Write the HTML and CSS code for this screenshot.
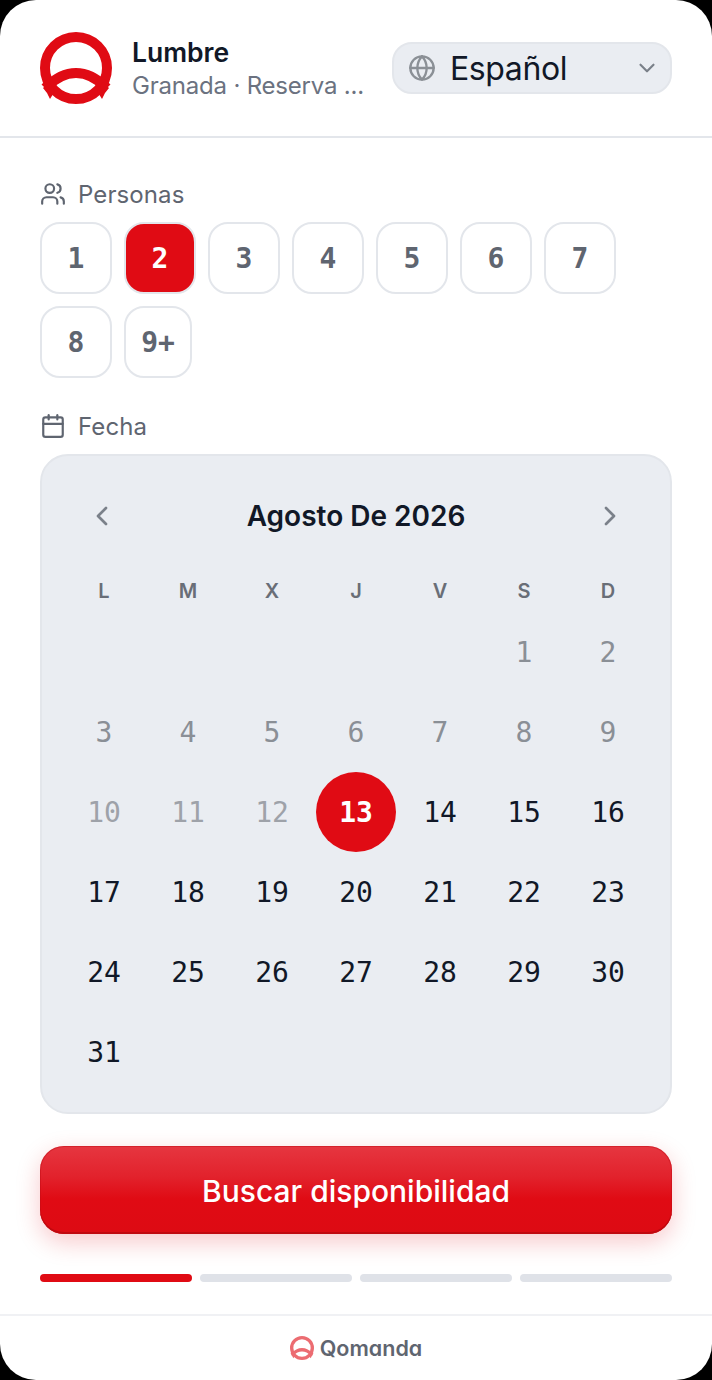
FILE: index.html
```html
<!DOCTYPE html>
<html lang="es">
<head>
    <meta charset="UTF-8">
    <meta name="viewport" content="width=device-width, initial-scale=1.0">
    <title>Lumbre - Reserva</title>
    <link rel="stylesheet" href="styles.css">
</head>
<body>
    <div class="screen">
        <header class="top">
            <svg class="logo" viewBox="0 0 72 72" fill="none">
                <circle cx="36" cy="36" r="31" stroke="#e00b14" stroke-width="10"/>
                <path d="M5 56 Q36 26 67 56" stroke="#e00b14" stroke-width="10"/>
                <path d="M3 56 L9 50 L15 59 L10 67 L7 61 Z" fill="#e00b14"/>
                <path d="M69 56 L63 50 L57 59 L62 67 L65 61 Z" fill="#e00b14"/>
            </svg>
            <div class="place">
                <div class="place-name">Lumbre</div>
                <div class="place-sub">Granada · Reserva ...</div>
            </div>
            <div class="lang">
                <svg class="lang-globe" viewBox="0 0 24 24" fill="none" stroke="currentColor" stroke-width="2" stroke-linecap="round" stroke-linejoin="round">
                    <circle cx="12" cy="12" r="10"/>
                    <path d="M12 2a14.5 14.5 0 0 0 0 20 14.5 14.5 0 0 0 0-20"/>
                    <path d="M2 12h20"/>
                </svg>
                <span class="lang-text">Español</span>
                <svg class="lang-chevron" viewBox="0 0 24 24" fill="none" stroke="currentColor" stroke-width="2" stroke-linecap="round" stroke-linejoin="round">
                    <path d="m6 9 6 6 6-6"/>
                </svg>
            </div>
        </header>

        <main class="content">
            <div class="field-label">
                <svg class="field-icon" viewBox="0 0 24 24" fill="none" stroke="currentColor" stroke-width="2" stroke-linecap="round" stroke-linejoin="round">
                    <path d="M16 21v-2a4 4 0 0 0-4-4H6a4 4 0 0 0-4 4v2"/>
                    <circle cx="9" cy="7" r="4"/>
                    <path d="M22 21v-2a4 4 0 0 0-3-3.87"/>
                    <path d="M16 3.13a4 4 0 0 1 0 7.75"/>
                </svg>
                Personas
            </div>
            <div class="party">
                <button class="party-btn">1</button>
                <button class="party-btn selected">2</button>
                <button class="party-btn">3</button>
                <button class="party-btn">4</button>
                <button class="party-btn">5</button>
                <button class="party-btn">6</button>
                <button class="party-btn">7</button>
                <button class="party-btn">8</button>
                <button class="party-btn">9+</button>
            </div>

            <div class="field-label date-label">
                <svg class="field-icon" viewBox="0 0 24 24" fill="none" stroke="currentColor" stroke-width="2" stroke-linecap="round" stroke-linejoin="round">
                    <path d="M8 2v4"/>
                    <path d="M16 2v4"/>
                    <rect x="3" y="4" width="18" height="18" rx="2"/>
                    <path d="M3 10h18"/>
                </svg>
                Fecha
            </div>
            <section class="calendar">
                <div class="cal-head">
                    <svg class="cal-nav" viewBox="0 0 24 24" fill="none" stroke="currentColor" stroke-width="2" stroke-linecap="round" stroke-linejoin="round"><path d="m15 18-6-6 6-6"/></svg>
                    <div class="cal-title">Agosto De 2026</div>
                    <svg class="cal-nav" viewBox="0 0 24 24" fill="none" stroke="currentColor" stroke-width="2" stroke-linecap="round" stroke-linejoin="round"><path d="m9 18 6-6-6-6"/></svg>
                </div>
                <div class="cal-week">
                    <span>L</span><span>M</span><span>X</span><span>J</span><span>V</span><span>S</span><span>D</span>
                </div>
                <div class="cal-days">
                    <span></span><span></span><span></span><span></span><span></span>
                    <span class="day past">1</span><span class="day past">2</span>
                    <span class="day past">3</span><span class="day past">4</span><span class="day past">5</span><span class="day past">6</span><span class="day past">7</span><span class="day past">8</span><span class="day past">9</span>
                    <span class="day faded">10</span><span class="day faded">11</span><span class="day faded">12</span><span class="day today">13</span><span class="day">14</span><span class="day">15</span><span class="day">16</span>
                    <span class="day">17</span><span class="day">18</span><span class="day">19</span><span class="day">20</span><span class="day">21</span><span class="day">22</span><span class="day">23</span>
                    <span class="day">24</span><span class="day">25</span><span class="day">26</span><span class="day">27</span><span class="day">28</span><span class="day">29</span><span class="day">30</span>
                    <span class="day">31</span>
                </div>
            </section>

            <button class="search-btn">Buscar disponibilidad</button>

            <div class="steps">
                <span class="step active"></span>
                <span class="step"></span>
                <span class="step"></span>
                <span class="step"></span>
            </div>
        </main>

        <footer class="bottom">
            <svg class="bottom-logo" viewBox="0 0 72 72" fill="none">
                <circle cx="36" cy="36" r="31" stroke="#e00b14" stroke-width="10"/>
                <path d="M5 56 Q36 26 67 56" stroke="#e00b14" stroke-width="10"/>
                <path d="M3 56 L9 50 L15 59 L10 67 L7 61 Z" fill="#e00b14"/>
                <path d="M69 56 L63 50 L57 59 L62 67 L65 61 Z" fill="#e00b14"/>
            </svg>
            <span class="bottom-name">Qomanda</span>
        </footer>
    </div>
</body>
</html>
```

FILE: styles.css
```css
* {
    box-sizing: border-box;
}
body {
    margin: 0;
    background-color: #000;
    font-family: Inter, "Liberation Sans", sans-serif;
    color: #111827;
}
.screen {
    width: 712px;
    height: 1380px;
    background-color: #fff;
    border-radius: 36px;
    overflow: hidden;
}
.top {
    display: flex;
    align-items: center;
    height: 138px;
    padding: 0 40px;
    border-bottom: 2px solid #e3e6eb;
}
.logo {
    width: 72px;
    height: 72px;
    flex-shrink: 0;
}
.place {
    flex: 1;
    min-width: 0;
    margin-left: 20px;
}
.place-name {
    font-size: 26.5px;
    line-height: 36px;
    font-weight: 600;
}
.place-sub {
    font-size: 24px;
    line-height: 32px;
    letter-spacing: -0.2px;
    color: #6b7280;
    white-space: nowrap;
}
.lang {
    display: flex;
    align-items: center;
    flex-shrink: 0;
    width: 280px;
    height: 52px;
    padding: 0 10px 0 14px;
    background-color: #eaedf2;
    border: 2px solid #e3e6eb;
    border-radius: 20px;
}
.lang-globe {
    width: 28px;
    height: 28px;
    color: #8b9096;
}
.lang-text {
    margin-left: 14px;
    font-size: 32px;
    letter-spacing: -0.4px;
    flex: 1;
}
.lang-chevron {
    width: 26px;
    height: 26px;
    color: #7b818a;
}
.content {
    padding: 42px 40px 0;
}
.field-label {
    display: flex;
    align-items: center;
    gap: 12px;
    height: 28px;
    font-size: 24px;
    letter-spacing: 0.1px;
    color: #5f6570;
}
.field-icon {
    width: 26px;
    height: 26px;
}
.party {
    display: flex;
    flex-wrap: wrap;
    gap: 12px;
    margin-top: 14px;
}
.party-btn {
    min-width: 72px;
    height: 72px;
    padding: 0 15px;
    background-color: #fff;
    border: 2px solid #e3e6eb;
    border-radius: 20px;
    font-family: "DejaVu Sans Mono", monospace;
    font-size: 28px;
    font-weight: 700;
    color: #5f6570;
}
.party-btn:last-child {
    min-width: 68px;
}
.party-btn.selected {
    background-color: #e00b14;
    color: #fff;
}
.date-label {
    margin-top: 34px;
}
.calendar {
    margin-top: 14px;
    padding: 20px;
    background-color: #eaedf2;
    border: 2px solid #e3e6eb;
    border-radius: 28px;
}
.cal-head {
    display: flex;
    align-items: center;
    justify-content: space-between;
    height: 80px;
    padding: 0 24px;
}
.cal-title {
    font-size: 28px;
    font-weight: 600;
}
.cal-nav {
    width: 32px;
    height: 32px;
    color: #7b818a;
}
.cal-week {
    display: grid;
    grid-template-columns: repeat(7, 84px);
    margin-top: 23px;
    font-size: 20px;
    line-height: 24px;
    font-weight: 600;
    text-align: center;
    color: #696e77;
}
.cal-days {
    display: grid;
    grid-template-columns: repeat(7, 84px);
    grid-auto-rows: 80px;
    margin-top: 9px;
}
.day {
    display: flex;
    align-items: center;
    justify-content: center;
    font-family: "DejaVu Sans Mono", monospace;
    font-size: 28px;
}
.day.past {
    color: #8a8f96;
}
.day.faded {
    color: #9ea2a9;
}
.day.today {
    width: 80px;
    height: 80px;
    justify-self: center;
    border-radius: 50%;
    background-color: #e00b14;
    color: #fff;
    font-weight: 700;
}
.search-btn {
    display: block;
    width: 100%;
    height: 88px;
    margin-top: 32px;
    padding-top: 3px;
    background: linear-gradient(to bottom, #e63640 0%, #e2222c 35%, #e00b14 60%, #dd0b13 100%);
    border: none;
    border-radius: 24px;
    box-shadow: inset 0 -2px 0 #c0090f, inset 0 0 0 1px rgba(190, 10, 20, 0.45), 0 8px 24px rgba(224, 11, 20, 0.22);
    font-family: inherit;
    font-size: 30px;
    font-weight: 500;
    color: #fff;
}
.steps {
    display: flex;
    gap: 8px;
    margin-top: 40px;
}
.step {
    flex: 1;
    height: 8px;
    border-radius: 4px;
    background-color: #dfe2e8;
}
.step.active {
    background-color: #e00b14;
}
.bottom {
    display: flex;
    align-items: center;
    justify-content: center;
    gap: 6px;
    height: 66px;
    margin-top: 32px;
    border-top: 2px solid #f0f1f4;
}
.bottom-logo {
    width: 24px;
    height: 24px;
    opacity: 0.6;
}
.bottom-name {
    font-size: 21.5px;
    font-weight: 600;
    font-feature-settings: "cv11";
    color: #5f6570;
}
```
